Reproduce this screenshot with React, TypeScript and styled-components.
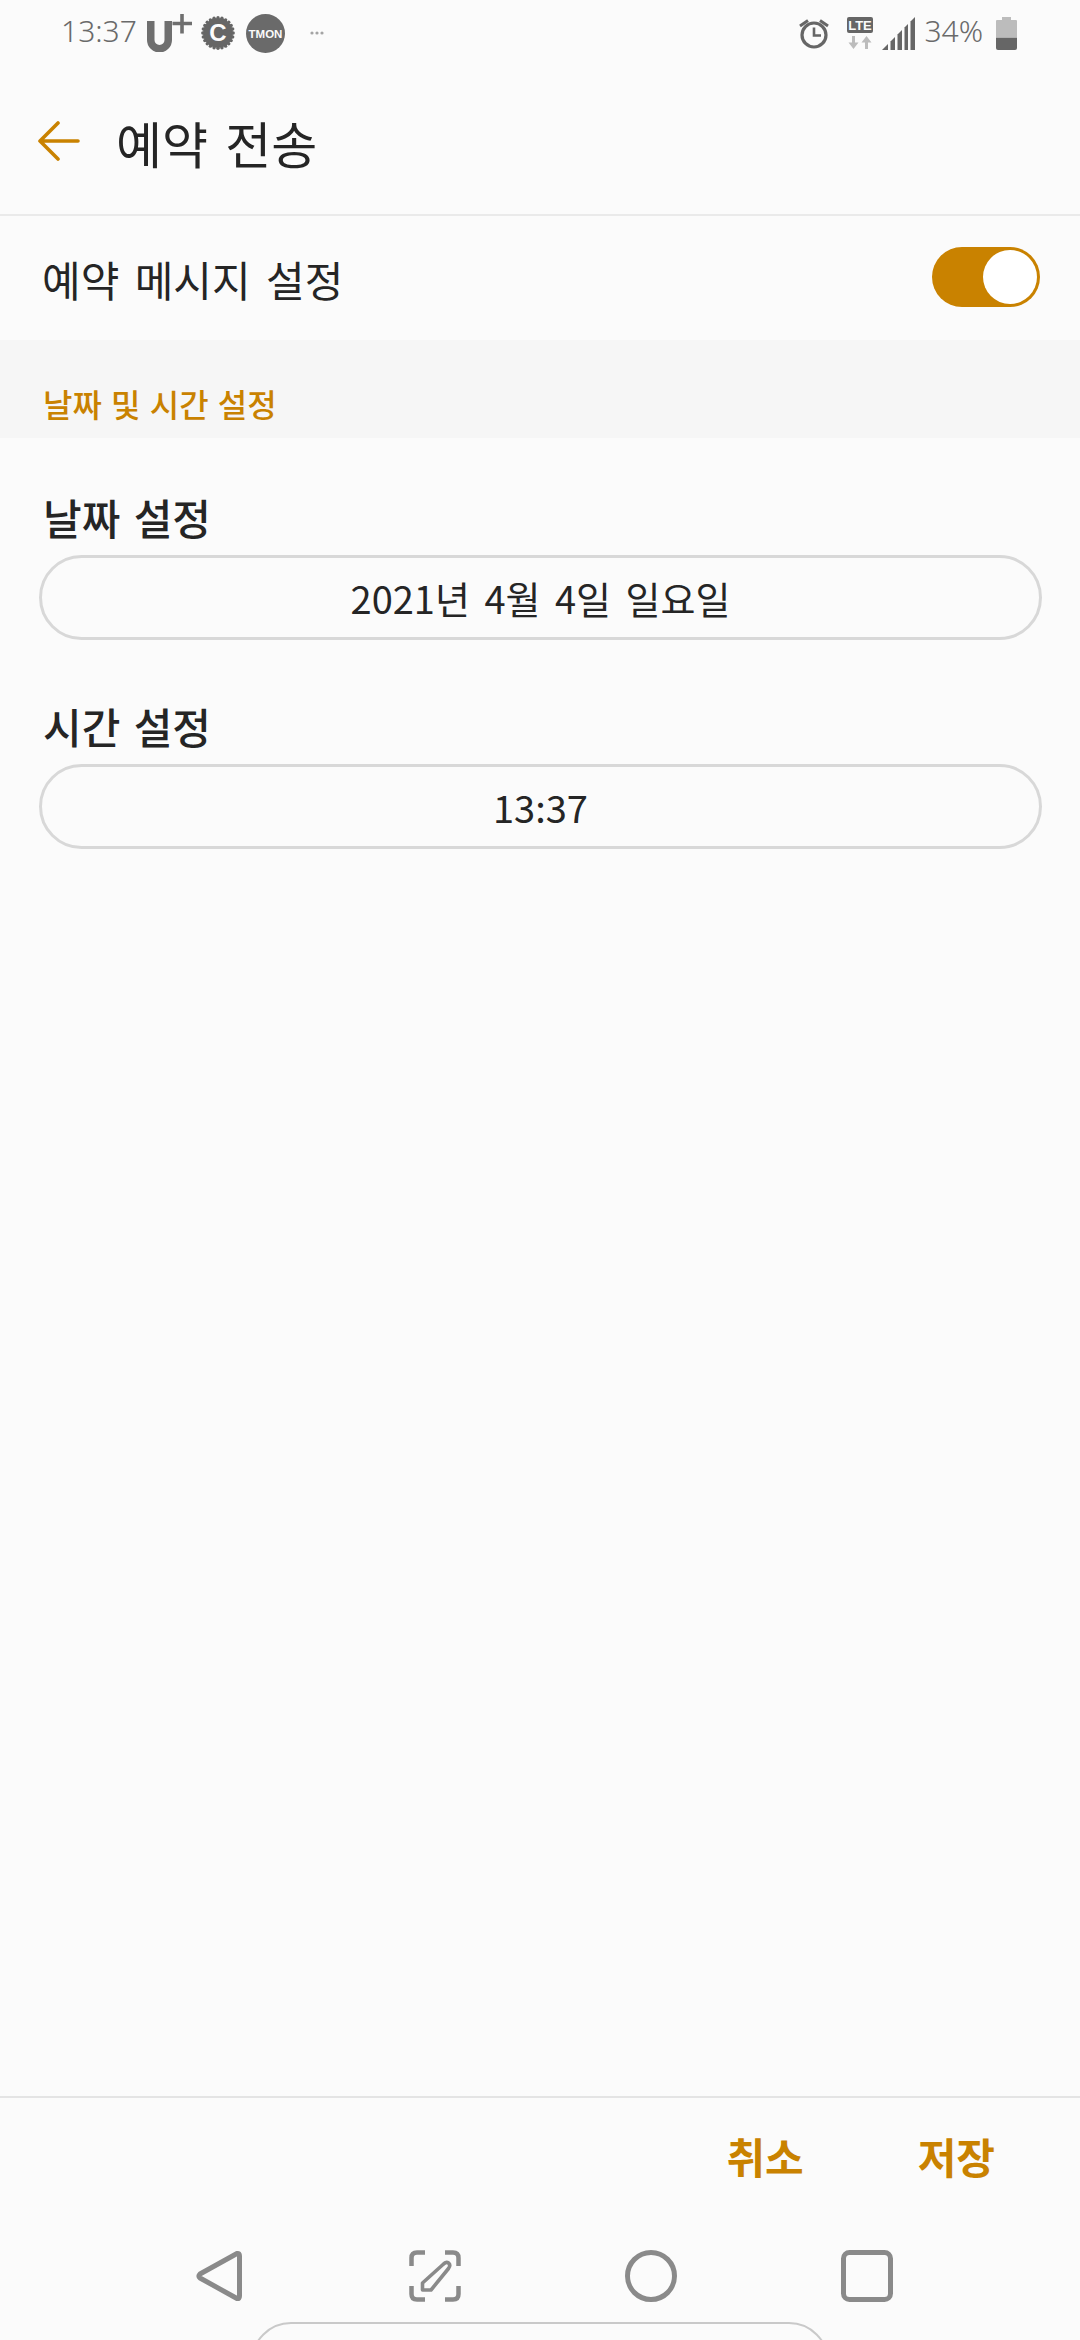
import React from "react";
import styled, { createGlobalStyle } from "styled-components";

const ACCENT = "#c98200";
const FONT = `"Noto Sans CJK KR", "Noto Sans", sans-serif`;

const Global = createGlobalStyle`
  html, body { margin: 0; padding: 0; background: #fbfbfb; }
  * { box-sizing: border-box; }
`;

const Page = styled.div`
  width: 1080px;
  height: 2340px;
  display: flex;
  flex-direction: column;
  background: #fbfbfb;
  font-family: ${FONT};
  color: #252525;
  overflow: hidden;
`;

const StatusBar = styled.div`
  height: 62px;
  flex: none;
  display: flex;
  align-items: center;
  justify-content: space-between;
  padding: 4px 63px 0 61px;
  color: #6a6a6a;
`;
const StatusGroup = styled.div`
  display: flex;
  align-items: center;
`;
const StatusText = styled.span<{ $ml?: number }>`
  font-family: "Noto Sans", sans-serif;
  font-weight: 300;
  font-size: 30px;
  line-height: 34px;
  margin-top: -4px;
  margin-left: ${(p) => p.$ml ?? 0}px;
`;
const StatusIcon = styled.svg<{ $ml?: number }>`
  display: block;
  flex: none;
  margin-left: ${(p) => p.$ml ?? 0}px;
`;

const Header = styled.header`
  height: 154px;
  flex: none;
  display: flex;
  align-items: center;
  padding: 10px 0 2px 38px;
  border-bottom: 2px solid #eaeaea;
`;
const BackIcon = styled.svg`
  display: block;
  margin-top: -2px;
`;
const Title = styled.h1`
  margin: 0 0 0 36px;
  font-size: 50px;
  font-weight: 400;
  line-height: 60px;
  word-spacing: 6px;
`;

const ToggleRow = styled.div`
  height: 124px;
  flex: none;
  display: flex;
  align-items: center;
  justify-content: space-between;
  padding: 0 40px 2px 42px;
`;
const RowLabel = styled.span`
  margin-top: 3px;
  font-size: 42px;
  line-height: 50px;
  word-spacing: 6px;
`;
const Toggle = styled.div`
  width: 108px;
  height: 60px;
  border-radius: 30px;
  background: ${ACCENT};
  display: flex;
  align-items: center;
  justify-content: flex-end;
  padding-right: 3px;
`;
const Knob = styled.div`
  width: 54px;
  height: 54px;
  border-radius: 50%;
  background: #fff;
`;

const SectionBand = styled.div`
  height: 98px;
  flex: none;
  display: flex;
  align-items: flex-end;
  padding: 0 43px 15px;
  background: #f6f6f6;
  color: ${ACCENT};
  font-size: 32px;
  font-weight: 500;
  line-height: 40px;
  word-spacing: 2px;
`;

const Field = styled.section`
  flex: none;
  padding: 0 39px;
  &:first-of-type { padding-top: 52px; }
`;
const FieldLabel = styled.h2`
  margin: 0 0 0 4px;
  font-size: 42px;
  font-weight: 500;
  line-height: 54px;
  height: 65px;
  word-spacing: 4px;
`;
const PillField = styled.div`
  height: 85px;
  width: 1003px;
  border: 3px solid #d8d8d8;
  border-radius: 43px;
  display: flex;
  align-items: center;
  justify-content: center;
  font-size: 38px;
  line-height: 50px;
  word-spacing: 6px;
`;
const FieldGap = styled.div`
  height: 59px;
  flex: none;
`;

const Spacer = styled.div`
  flex: 1;
`;

const ActionBar = styled.div`
  height: 118px;
  flex: none;
  display: flex;
  align-items: center;
  justify-content: flex-end;
  gap: 114px;
  padding: 0 85px 0 0;
  border-top: 2px solid #e4e4e4;
`;
const ActionButton = styled.button`
  border: 0;
  padding: 0;
  background: none;
  color: ${ACCENT};
  font-family: ${FONT};
  font-size: 42px;
  font-weight: 700;
  line-height: 50px;
`;

const NavBar = styled.nav`
  height: 108px;
  flex: none;
  display: flex;
  align-items: flex-start;
  justify-content: center;
  padding: 36px 0 0 6px;
`;
const NavSlot = styled.div`
  width: 216px;
  display: flex;
  justify-content: center;
`;
const HandleClip = styled.div`
  height: 18px;
  flex: none;
  overflow: hidden;
  display: flex;
  justify-content: center;
`;
const Handle = styled.div`
  width: 578px;
  height: 80px;
  flex: none;
  border: 2px solid #c9c9c9;
  border-radius: 40px;
  background: #fbfbfb;
`;

const NAV = "#8a8a8a";

function Alarm() {
  return (
    <StatusIcon width="30" height="32" viewBox="0 0 30 32" fill="none" stroke="#666">
      <circle cx="15" cy="18" r="12" strokeWidth="3.2" />
      <path d="M15 10.5V18.5H22" strokeWidth="2.6" />
      <path d="M1 9L9 3.5M29 9L21 3.5" strokeWidth="3" />
    </StatusIcon>
  );
}
function Lte() {
  return (
    <StatusIcon $ml={18} width="26" height="32" viewBox="0 0 26 32">
      <rect x="0" y="0" width="26" height="16" rx="2" fill="#666" />
      <text x="13" y="13" textAnchor="middle" fontFamily="Liberation Sans" fontWeight="700" fontSize="13" fill="#fbfbfb">LTE</text>
      <path d="M6.5 32L1.5 25.5H5V19H8V25.5H11.5Z" fill="#bcbcbc" />
      <path d="M19.5 19L14.5 25.5H18V32H21V25.5H24.5Z" fill="#bcbcbc" />
    </StatusIcon>
  );
}
function Signal() {
  return (
    <StatusIcon $ml={9} width="33" height="33" viewBox="0 0 33 33" fill="#666">
      <path d="M0 33L6 27V33Z" />
      <path d="M8.5 33V24.5L13 20V33Z" />
      <path d="M15.5 33V17.5L20 13V33Z" />
      <path d="M22.5 33V10.5L26 7V33Z" />
      <path d="M28.5 33V4.5L33 0V33Z" />
    </StatusIcon>
  );
}
function Battery() {
  return (
    <StatusIcon $ml={13} width="21" height="33" viewBox="0 0 21 33">
      <path d="M6 0H15V3H20A1 1 0 0 1 21 4V20H0V4A1 1 0 0 1 1 3H6Z" fill="#bcbcbc" />
      <path d="M0 20.5H21V31A2 2 0 0 1 19 33H2A2 2 0 0 1 0 31Z" fill="#666" />
    </StatusIcon>
  );
}

function CarrierMark() {
  return (
    <StatusIcon $ml={9} width="48" height="38" viewBox="0 0 48 38" fill="none" stroke="#6f6f6f">
      <path d="M4.750 7V26A8.750 8.750 0 0 0 22.250 26V7" strokeWidth="7.500" />
      <path d="M36 0V19.500M26.500 9.500H46" strokeWidth="3.600" />
    </StatusIcon>
  );
}
function CBadge() {
  const teeth = Array.from({ length: 24 }, (_, i) => {
    const a = (i / 24) * Math.PI * 2;
    return <circle key={i} cx={17 + 15.2 * Math.cos(a)} cy={17 + 15.2 * Math.sin(a)} r={1.7} fill="#666" />;
  });
  return (
    <StatusIcon $ml={7} width="34" height="34" viewBox="0 0 34 34">
      <circle cx="17" cy="17" r="15" fill="#666" />
      {teeth}
      <text x="17" y="25" textAnchor="middle" fontFamily="Liberation Sans" fontWeight="700" fontSize="24" fill="#fbfbfb">C</text>
    </StatusIcon>
  );
}
function TmonBadge() {
  return (
    <StatusIcon $ml={11} width="39" height="39" viewBox="0 0 39 39">
      <circle cx="19.500" cy="19.500" r="19.500" fill="#6a6a6a" />
      <text x="19.500" y="23.500" textAnchor="middle" fontFamily="Liberation Sans" fontWeight="700" fontSize="11.500" fill="#fbfbfb">TMON</text>
    </StatusIcon>
  );
}
function Dots() {
  return (
    <StatusIcon $ml={25} width="14" height="4" viewBox="0 0 14 4" fill="#a4a4a4">
      <circle cx="2" cy="2" r="1.600" />
      <circle cx="7" cy="2" r="1.600" />
      <circle cx="12" cy="2" r="1.600" />
    </StatusIcon>
  );
}

function Arrow() {
  return (
    <BackIcon width="42" height="40" viewBox="0 0 42 40" fill="none" stroke={ACCENT} strokeWidth="3.600" strokeLinecap="round" strokeLinejoin="round">
      <path d="M40 20H3M20 2L2 20L20 38" />
    </BackIcon>
  );
}

function NavBack() {
  return (
    <svg width="46" height="52" viewBox="0 0 46 52" fill="none" stroke={NAV} strokeWidth="5" strokeLinejoin="round">
      <path d="M41 3.500Q43.500 3 43.500 6V46Q43.500 49 41 48.500L4 28Q2 26 4 24Z" />
    </svg>
  );
}
function NavEdit() {
  return (
    <svg width="52" height="52" viewBox="0 0 52 52" fill="none" stroke={NAV} strokeWidth="4.500">
      <path d="M2.500 16V8Q2.500 2.500 8 2.500H16M36 2.500H44Q49.500 2.500 49.500 8V16M49.500 36V44Q49.500 49.500 44 49.500H36M16 49.500H8Q2.500 49.500 2.500 44V36" />
      <path d="M34 14.500Q37 11 39.500 13Q42 15 39.500 18.500L22 40H13.500V33Z" strokeWidth="3.600" strokeLinejoin="round" />
    </svg>
  );
}
function NavHome() {
  return (
    <svg width="52" height="52" viewBox="0 0 52 52" fill="none" stroke={NAV} strokeWidth="5">
      <circle cx="26" cy="26" r="23.500" />
    </svg>
  );
}
function NavRecent() {
  return (
    <svg width="52" height="52" viewBox="0 0 52 52" fill="none" stroke={NAV} strokeWidth="5">
      <rect x="2.500" y="2.500" width="47" height="47" rx="6" />
    </svg>
  );
}

export default function App() {
  return (
    <Page>
      <Global />
      <StatusBar>
        <StatusGroup>
          <StatusText>13:37</StatusText>
          <CarrierMark />
          <CBadge />
          <TmonBadge />
          <Dots />
        </StatusGroup>
        <StatusGroup>
          <Alarm />
          <Lte />
          <Signal />
          <StatusText $ml={9}>34%</StatusText>
          <Battery />
        </StatusGroup>
      </StatusBar>
      <Header>
        <Arrow />
        <Title>예약 전송</Title>
      </Header>
      <ToggleRow>
        <RowLabel>예약 메시지 설정</RowLabel>
        <Toggle>
          <Knob />
        </Toggle>
      </ToggleRow>
      <SectionBand>날짜 및 시간 설정</SectionBand>
      <Field>
        <FieldLabel>날짜 설정</FieldLabel>
        <PillField>2021년 4월 4일 일요일</PillField>
      </Field>
      <FieldGap />
      <Field>
        <FieldLabel>시간 설정</FieldLabel>
        <PillField>13:37</PillField>
      </Field>
      <Spacer />
      <ActionBar>
        <ActionButton>취소</ActionButton>
        <ActionButton>저장</ActionButton>
      </ActionBar>
      <NavBar>
        <NavSlot><NavBack /></NavSlot>
        <NavSlot><NavEdit /></NavSlot>
        <NavSlot><NavHome /></NavSlot>
        <NavSlot><NavRecent /></NavSlot>
      </NavBar>
      <HandleClip>
        <Handle />
      </HandleClip>
    </Page>
  );
}
